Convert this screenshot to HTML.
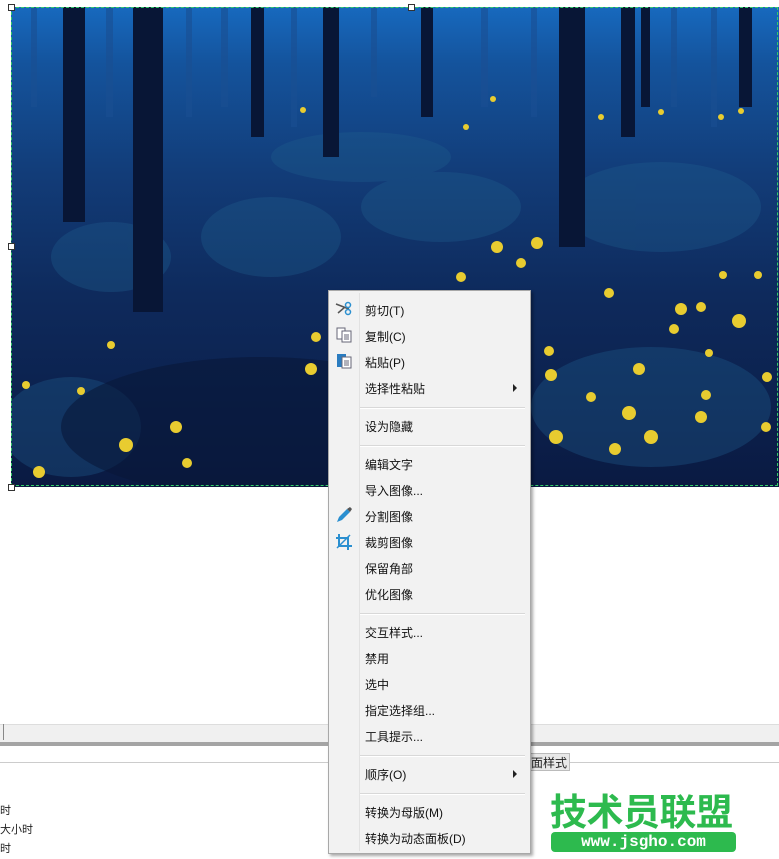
<!DOCTYPE html>
<html><head><meta charset="utf-8"><style>
body{margin:0;width:779px;height:857px;overflow:hidden;background:#fff;font-family:"Liberation Sans","Noto Sans CJK SC",sans-serif;position:relative}
.abs{position:absolute}
.menu{position:absolute;left:328px;top:290px;width:201px;height:562px;background:#f2f2f2;border:1px solid #a8a8a8;box-shadow:2px 2px 3px rgba(0,0,0,.35)}
.menu .it{position:absolute;left:36px;font-size:12px;color:#111;line-height:14px}
.menu .sep{position:absolute;left:31px;width:165px;height:1px;background:#d8d8d8;border-bottom:1px solid #fff}
.menu .vl{position:absolute;left:30px;top:2px;bottom:2px;width:1px;background:#e2e2e2}
.arr{position:absolute;left:184px;width:0;height:0;border-left:4px solid #222;border-top:4px solid transparent;border-bottom:4px solid transparent}
.h{position:absolute;width:5px;height:5px;border:1px solid #333;background:#fff}
</style></head><body>
<svg class="abs" style="left:11px;top:7px" width="768" height="480" viewBox="0 0 768 480">
<defs>
<linearGradient id="g" x1="0" y1="0" x2="0" y2="1">
<stop offset="0" stop-color="#1769be"/><stop offset=".12" stop-color="#14539c"/><stop offset=".35" stop-color="#123c78"/><stop offset=".6" stop-color="#0e2a5c"/><stop offset="1" stop-color="#0a1a42"/></linearGradient>
</defs>
<rect width="768" height="480" fill="url(#g)"/>
<g fill="#1a4f92" opacity=".6">
<rect x="20" y="0" width="6" height="100"/><rect x="95" y="0" width="7" height="110"/><rect x="175" y="0" width="6" height="110"/><rect x="210" y="0" width="7" height="100"/><rect x="280" y="0" width="6" height="120"/><rect x="360" y="0" width="6" height="90"/><rect x="470" y="0" width="7" height="100"/><rect x="520" y="0" width="6" height="110"/><rect x="660" y="0" width="6" height="100"/><rect x="700" y="0" width="6" height="120"/>
</g>
<g fill="#205f8e" opacity=".35">
<ellipse cx="100" cy="250" rx="60" ry="35"/><ellipse cx="260" cy="230" rx="70" ry="40"/><ellipse cx="430" cy="200" rx="80" ry="35"/><ellipse cx="650" cy="200" rx="100" ry="45"/><ellipse cx="350" cy="150" rx="90" ry="25"/><ellipse cx="640" cy="400" rx="120" ry="60"/><ellipse cx="60" cy="420" rx="70" ry="50"/>
</g>
<g fill="#081636">
<rect x="52" y="0" width="22" height="215"/><rect x="122" y="0" width="30" height="305"/><rect x="240" y="0" width="13" height="130"/><rect x="312" y="0" width="16" height="150"/><rect x="410" y="0" width="12" height="110"/><rect x="548" y="0" width="26" height="240"/><rect x="610" y="0" width="14" height="130"/><rect x="630" y="0" width="9" height="100"/><rect x="728" y="0" width="13" height="100"/>
</g>
<g fill="#081838" opacity=".6"><ellipse cx="250" cy="420" rx="200" ry="70"/></g>
<g fill="#e8cc30">
<circle cx="486" cy="240" r="6"/><circle cx="526" cy="236" r="6"/><circle cx="450" cy="270" r="5"/><circle cx="510" cy="256" r="5"/><circle cx="598" cy="286" r="5"/><circle cx="670" cy="302" r="6"/><circle cx="690" cy="300" r="5"/><circle cx="728" cy="314" r="7"/><circle cx="663" cy="322" r="5"/><circle cx="538" cy="344" r="5"/><circle cx="540" cy="368" r="6"/><circle cx="628" cy="362" r="6"/><circle cx="580" cy="390" r="5"/><circle cx="618" cy="406" r="7"/><circle cx="640" cy="430" r="7"/><circle cx="690" cy="410" r="6"/><circle cx="695" cy="388" r="5"/><circle cx="545" cy="430" r="7"/><circle cx="604" cy="442" r="6"/><circle cx="756" cy="370" r="5"/><circle cx="755" cy="420" r="5"/><circle cx="300" cy="362" r="6"/><circle cx="305" cy="330" r="5"/><circle cx="165" cy="420" r="6"/><circle cx="115" cy="438" r="7"/><circle cx="176" cy="456" r="5"/><circle cx="28" cy="465" r="6"/><circle cx="15" cy="378" r="4"/><circle cx="100" cy="338" r="4"/><circle cx="70" cy="384" r="4"/><circle cx="455" cy="120" r="3"/><circle cx="482" cy="92" r="3"/><circle cx="590" cy="110" r="3"/><circle cx="710" cy="110" r="3"/><circle cx="730" cy="104" r="3"/><circle cx="292" cy="103" r="3"/><circle cx="650" cy="105" r="3"/><circle cx="712" cy="268" r="4"/><circle cx="747" cy="268" r="4"/><circle cx="698" cy="346" r="4"/></g>
</svg>
<div class="abs" style="left:11px;top:7px;width:767px;height:479px;border:1px dashed #3c6;box-sizing:border-box"></div>
<div class="h" style="left:8px;top:4px"></div><div class="h" style="left:408px;top:4px"></div><div class="h" style="left:8px;top:243px"></div><div class="h" style="left:8px;top:484px"></div>
<div class="abs" style="left:0;top:724px;width:779px;height:18px;background:#f0f0f0;border-top:1px solid #ddd"></div>
<div class="abs" style="left:0;top:724px;width:3px;height:16px;border-right:1px solid #888"></div>
<div class="abs" style="left:0;top:742px;width:779px;height:4px;background:#a4a4a4"></div>
<div class="abs" style="left:0;top:762px;width:779px;height:1px;background:#ccc"></div>
<div class="abs" style="left:524px;top:753px;width:46px;height:18px;background:#e8e8e8;border:1px solid #bbb;font-size:12px;line-height:18px;color:#222;text-align:right;padding-right:2px;box-sizing:border-box">面样式</div>
<div class="abs" style="left:0;top:802px;font-size:11px;color:#222;line-height:19px">时<br>大小时<br>时</div>
<div class="abs" style="left:550px;top:786px;font-size:37px;font-weight:bold;color:#2dba4e;letter-spacing:-0.5px;line-height:46px;font-family:'Noto Sans CJK SC',sans-serif">技术员联盟</div>
<div class="abs" style="left:551px;top:832px;width:185px;height:20px;background:#2dba4e;border-radius:4px;color:#fff;font:bold 16px 'Liberation Mono',monospace;text-align:center;line-height:20px">www.jsgho.com</div>
<div class="menu">
<div class="vl"></div>
<svg class="abs" style="left:6px;top:10px" width="18" height="16"><path d="M1 3 L14 8 M3 12 L10 6" stroke="#555" stroke-width="1.5"/><circle cx="13" cy="4" r="2.5" fill="none" stroke="#2a8fd0" stroke-width="1.5"/><circle cx="13" cy="11" r="2.5" fill="none" stroke="#2a8fd0" stroke-width="1.5"/></svg>
<svg class="abs" style="left:7px;top:36px" width="16" height="16"><rect x="1" y="1" width="8" height="11" fill="#fff" stroke="#667"/><rect x="6" y="4" width="9" height="11" fill="#fff" stroke="#667"/><path d="M8 8h5M8 10h5M8 12h5" stroke="#667"/></svg>
<svg class="abs" style="left:7px;top:62px" width="16" height="16"><rect x="1" y="1" width="9" height="13" fill="#2a7cc0"/><rect x="6" y="4" width="9" height="11" fill="#fff" stroke="#667"/><path d="M8 8h5M8 10h5M8 12h5" stroke="#667"/></svg>
<svg class="abs" style="left:6px;top:215px" width="18" height="18"><path d="M2 16 L4 11 L12 3 L15 6 L7 14 Z" fill="#2a8fd0"/><path d="M12 3 L15 1 L17 3 L15 6Z" fill="#555"/></svg>
<svg class="abs" style="left:6px;top:242px" width="18" height="18"><path d="M4 1 V13 H17 M1 5 H13 V17" stroke="#2a8fd0" stroke-width="2" fill="none"/><path d="M2 15 L15 2" stroke="#2a8fd0" stroke-width="1.5"/></svg>
<div class="it" style="top:13px">剪切(T)</div>
<div class="it" style="top:39px">复制(C)</div>
<div class="it" style="top:65px">粘贴(P)</div>
<div class="it" style="top:91px">选择性粘贴</div><div class="arr" style="top:93px"></div>
<div class="sep" style="top:116px"></div>
<div class="it" style="top:129px">设为隐藏</div>
<div class="sep" style="top:154px"></div>
<div class="it" style="top:167px">编辑文字</div>
<div class="it" style="top:193px">导入图像...</div>
<div class="it" style="top:219px">分割图像</div>
<div class="it" style="top:245px">裁剪图像</div>
<div class="it" style="top:271px">保留角部</div>
<div class="it" style="top:297px">优化图像</div>
<div class="sep" style="top:322px"></div>
<div class="it" style="top:335px">交互样式...</div>
<div class="it" style="top:361px">禁用</div>
<div class="it" style="top:387px">选中</div>
<div class="it" style="top:413px">指定选择组...</div>
<div class="it" style="top:439px">工具提示...</div>
<div class="sep" style="top:464px"></div>
<div class="it" style="top:477px">顺序(O)</div><div class="arr" style="top:479px"></div>
<div class="sep" style="top:502px"></div>
<div class="it" style="top:515px">转换为母版(M)</div>
<div class="it" style="top:541px">转换为动态面板(D)</div>
</div>
</body></html>
